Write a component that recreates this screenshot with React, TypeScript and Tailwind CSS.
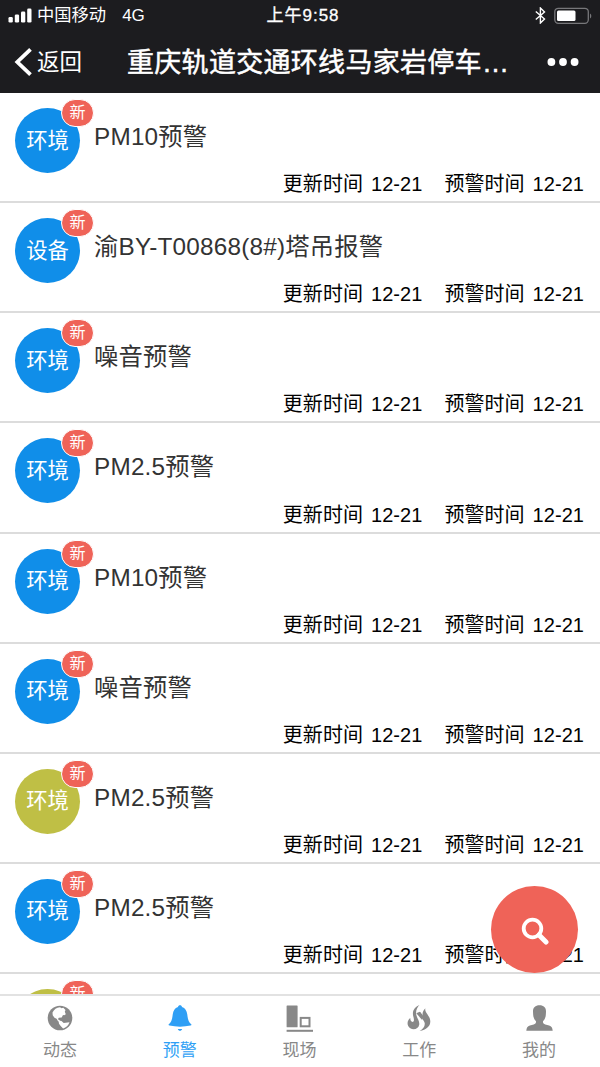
import React from "react";

type Alert = {
  id: number;
  kind: string;
  title: string;
  color: "blue" | "olive";
};

const alerts: Alert[] = [
  { id: 1, kind: "环境", title: "PM10预警", color: "blue" },
  { id: 2, kind: "设备", title: "渝BY-T00868(8#)塔吊报警", color: "blue" },
  { id: 3, kind: "环境", title: "噪音预警", color: "blue" },
  { id: 4, kind: "环境", title: "PM2.5预警", color: "blue" },
  { id: 5, kind: "环境", title: "PM10预警", color: "blue" },
  { id: 6, kind: "环境", title: "噪音预警", color: "blue" },
  { id: 7, kind: "环境", title: "PM2.5预警", color: "olive" },
  { id: 8, kind: "环境", title: "PM2.5预警", color: "blue" },
];

const StatusBar = () => (
  <div className="grid h-[31px] grid-cols-3 items-center pl-[8px] pr-[7px] text-[17px] leading-none">
    <div className="flex items-center">
      <svg className="mr-[5px] h-[15px] w-[24px]" viewBox="0 0 24 15" fill="white">
        <rect x="0.5" y="9" width="4.3" height="5.6" rx="1.3" />
        <rect x="6.8" y="6.5" width="4.3" height="8.1" rx="1.3" />
        <rect x="13" y="3.6" width="4.3" height="11" rx="1.3" />
        <rect x="19.2" y="0.6" width="4.3" height="14" rx="1.3" />
      </svg>
      <span className="text-[17.3px]">中国移动</span>
      <span className="ml-[16px]">4G</span>
    </div>
    <div className="whitespace-nowrap pl-[5px] text-center tracking-[1px] [-webkit-text-stroke:0.3px_white]">上午9:58</div>
    <div className="flex items-center justify-end">
      <svg className="mr-[8px] h-[17px] w-[11px]" viewBox="0 0 11 17" fill="none" stroke="white" strokeWidth="1.4">
        <path d="M0.8 4.5 9.5 12 5.4 16V1L9.5 5 0.8 12.5" />
      </svg>
      <svg className="h-[18px] w-[39px]" viewBox="0 0 39 18">
        <rect x="0.8" y="1.3" width="33.5" height="15" rx="3.5" fill="none" stroke="#77777a" strokeWidth="1.3" />
        <rect x="3" y="3.6" width="18.5" height="10.5" rx="1.5" fill="white" />
        <path d="M36 6.5a3 3 0 0 1 0 5z" fill="#77777a" />
      </svg>
    </div>
  </div>
);

const NavBar = () => (
  <div className="flex h-[62px] items-center pl-[14px] pr-[21px]">
    <svg className="h-[28px] w-[19px]" viewBox="0 0 18 28" fill="none" stroke="white" strokeWidth="3.8">
      <path d="M16 1.4 2.8 14 16 26.6" />
    </svg>
    <span className="ml-[4px] w-[90px] pt-[2px] text-[22.5px]">返回</span>
    <h1 className="flex-1 whitespace-nowrap pt-[2px] text-[27px] font-normal tracking-[0.3px] [-webkit-text-stroke:0.5px_white]">
      重庆轨道交通环线马家岩停车…
    </h1>
    <svg className="h-[8px] w-[32px]" viewBox="0 0 32 8" fill="white">
      <circle cx="4.4" cy="4" r="3.9" />
      <circle cx="16" cy="4" r="3.9" />
      <circle cx="27.6" cy="4" r="3.9" />
    </svg>
  </div>
);

const Avatar = ({ kind, color }: { kind: string; color: Alert["color"] }) => (
  <div
    className={`relative flex size-[65px] shrink-0 items-center justify-center rounded-full pt-[2px] text-[21.3px] text-white ${
      color === "blue" ? "bg-[#108ee9]" : "bg-[#bfbf45]"
    }`}
  >
    {kind}
    <span className="absolute -top-[9px] left-[46px] flex h-[28px] w-[33px] items-center justify-center rounded-full border border-white bg-[#ef6358] text-[16px] leading-none">
      新
    </span>
  </div>
);

const AlertRow = ({ alert }: { alert: Alert }) => (
  <li className="flex h-[110.13px] shrink-0 flex-col justify-between border-b-2 border-[#dcdcdc] pl-[15px] pr-[16px] pt-[15px]">
    <div className="flex h-[65px]">
      <Avatar kind={alert.kind} color={alert.color} />
      <h2 className="ml-[14px] mt-[11px] text-[24.3px] leading-[36px] tracking-[0.22px] text-[#333]">{alert.title}</h2>
    </div>
    <div className="flex justify-end gap-[22px] pb-[5px] text-[20px] leading-[23px] tracking-[0.05px] text-black [word-spacing:2.4px]">
      <span>更新时间 12-21</span>
      <span>预警时间 12-21</span>
    </div>
  </li>
);

const GlobeIcon = () => (
  <svg className="size-[26px]" viewBox="0 0 26 26">
    <circle cx="13" cy="13" r="12.3" fill="#888" />
    <path
      d="M5.5 7.5C7 4.5 9.5 2.6 13 2.3l1.5 1 1.8-.6 2.2 2.3-.7 1.8 1 2.5-1.6 1-1.2-.3-1.3 2.5-2.9.3-.9 1.4 1.7 1.1.3 1.6-2-.9-1.3-2.3-2.1-.9-1.8-2.5z"
      fill="white"
    />
    <path d="m11.5 15.5 3 .5 2.2 2 5.8-.8c-1.2 3.2-3.2 5.3-6.4 6.3l-2.2-2.3-1.9-2.4z" fill="white" />
  </svg>
);

const BellIcon = () => (
  <svg className="size-[26px]" viewBox="0 0 26 26" fill="#2f9ff5">
    <path d="M13 .3c1.1 0 1.8.6 2 1.6 3.3 1 4.7 3.6 5.2 7.2.6 5.2 1.4 8.2 4 10.2.6.5.2 1-.7 1.2-6.5 1.5-14.500 1.500-21 0-.9-.2-1.300-.7-.7-1.200 2.600-2 3.400-5 4-10.200.5-3.600 1.900-6.200 5.200-7.200.2-1 .9-1.600 2-1.600z" />
    <path d="M10.8 24h4.4c-.4 1.2-1.2 1.8-2.2 1.8s-1.8-.6-2.2-1.8z" />
  </svg>
);

const SiteIcon = () => (
  <svg className="size-[27px]" viewBox="0 0 27 27" fill="#888">
    <rect x="0.6" y="0.5" width="11" height="21.8" rx="0.6" />
    <rect x="14.7" y="12.9" width="8.8" height="8.4" fill="none" stroke="#888" strokeWidth="2" />
    <rect x="0.6" y="24.8" width="26.4" height="2" />
  </svg>
);

const FlameIcon = () => (
  <svg className="size-[26px]" viewBox="0 0 26 26" fill="#888">
    <path d="M13.5.1C8.4 2.2 6 6.200 7.200 11c.6 2.300 1.200 4.500.3 5.500-1.400 1.300-3.400-.3-3.200-3.600C.7 15.500.6 20.800 4.300 23.300c3.500 2.200 8.200.5 8.900-3.500.7-4.200-2.700-7-3.100-11C9.800 5.300 11.400 2.200 13.500.1z" />
    <path d="M19.4 3.300c-1.300 4 4.900 7.200 4.900 13.200 0 4.900-4 8.300-10.700 9.400 3.700-2.100 5.500-4.500 5.100-7.800-.4-3.100-5.500-6.200-4.700-11 1.200 1.200 2.100 2.200 2.600 3.600C16.300 8 17 5.400 19.400 3.300z" />
    <path d="m10.3 8.3 3.500-1.500 3.100 4.600-.8 3.500z" />
  </svg>
);

const PersonIcon = () => (
  <svg className="h-[26px] w-[27px]" viewBox="0 0 27 26" fill="#888">
    <path d="M13.5.3c4.3 0 6.600 2.400 6.500 6.400l-.2 3.200c-.2 2.700-1.300 4.900-2.700 6.200-.4 1.800.3 2.800 2.200 3.300l3.800 1c2.500.7 3.300 2.100 3.600 5.300H.3c.3-3.200 1.100-4.600 3.600-5.300l3.800-1c1.900-.5 2.600-1.500 2.200-3.300-1.400-1.300-2.500-3.500-2.700-6.200L7 6.700C6.900 2.700 9.200.3 13.500.3z" />
  </svg>
);

const tabs = [
  { label: "动态", icon: <GlobeIcon />, active: false },
  { label: "预警", icon: <BellIcon />, active: true },
  { label: "现场", icon: <SiteIcon />, active: false },
  { label: "工作", icon: <FlameIcon />, active: false },
  { label: "我的", icon: <PersonIcon />, active: false },
];

const TabBar = () => (
  <nav className="grid h-[73px] shrink-0 grid-cols-5 border-t-2 border-[#e2e2e2] bg-white pr-px">
    {tabs.map((tab) => (
      <button
        key={tab.label}
        className={`flex flex-col items-center pt-[9px] text-[17px] leading-[24px] ${
          tab.active ? "text-[#2f9ff5]" : "text-[#888]"
        }`}
      >
        <span className="flex h-[27px] items-start">{tab.icon}</span>
        <span className="mt-[7px]">{tab.label}</span>
      </button>
    ))}
  </nav>
);

export default function App() {
  return (
    <div className="relative flex h-[1067px] w-[600px] flex-col overflow-hidden bg-white font-['Liberation_Sans','Noto_Sans_CJK_SC',sans-serif]">
      <header className="h-[93px] shrink-0 bg-[#1c1c1f] text-white">
        <StatusBar />
        <NavBar />
      </header>
      <ul className="flex min-h-0 flex-1 flex-col overflow-hidden">
        {alerts.map((alert) => (
          <AlertRow key={alert.id} alert={alert} />
        ))}
        {/* next item, only its top edge is scrolled into view */}
        <li className="shrink-0 pl-[15px] pt-[15px]">
          <Avatar kind="" color="olive" />
        </li>
      </ul>
      <TabBar />
      <button
        aria-label="搜索"
        className="absolute bottom-[94px] right-[22px] flex size-[87px] items-center justify-center rounded-full bg-[#ef6358]"
      >
        <svg className="mt-[3px] size-[28px]" viewBox="0 0 28 28" fill="none" stroke="white">
          <circle cx="11.5" cy="11.5" r="8.8" strokeWidth="3.8" />
          <path d="m18 18 7 7" strokeWidth="5" strokeLinecap="round" />
        </svg>
      </button>
    </div>
  );
}
